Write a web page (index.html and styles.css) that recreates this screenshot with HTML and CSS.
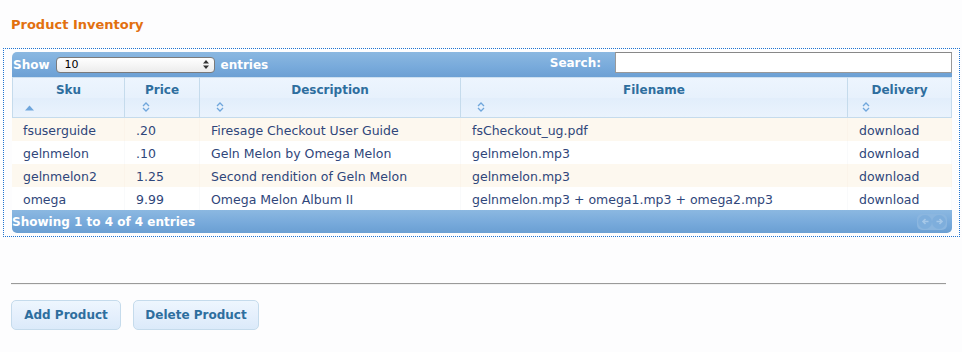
FILE: index.html
```html
<!DOCTYPE html>
<html lang="en">
<head>
  <meta charset="UTF-8">
  <meta name="viewport" content="width=device-width, initial-scale=1.0">
  <title>Product Inventory</title>
  <link rel="stylesheet" href="styles.css">
</head>
<body>
  <h2 class="title">Product Inventory</h2>

  <div class="dataWrap">
    <div class="topBar">
      <div class="lengthBox">
        <span>Show</span>
        <div class="selectBox">
          <span>10</span>
          <svg width="6" height="9" viewBox="0 0 6 9"><path d="M0 3.5 L3 0 L6 3.5 Z M0 5.5 L3 9 L6 5.5 Z" fill="#333"/></svg>
        </div>
        <span>entries</span>
      </div>
      <div class="searchBox">
        <span>Search:</span>
        <input type="text" class="searchInput">
      </div>
    </div>

    <table class="grid">
      <thead>
        <tr>
          <th class="colSku"><div class="thLabel">Sku</div><div class="sortIcon"><svg width="9" height="6" viewBox="0 0 9 6"><path d="M0 5.5 L4.5 0.5 L9 5.5 Z" fill="#6fa6dc"/></svg></div></th>
          <th class="colPrice"><div class="thLabel">Price</div><div class="sortIcon"><svg width="8" height="10" viewBox="0 0 8 10"><path d="M1 4 L4 1 L7 4 M1 6 L4 9 L7 6" fill="none" stroke="#6fa6dc" stroke-width="1.3"/></svg></div></th>
          <th class="colDesc"><div class="thLabel">Description</div><div class="sortIcon"><svg width="8" height="10" viewBox="0 0 8 10"><path d="M1 4 L4 1 L7 4 M1 6 L4 9 L7 6" fill="none" stroke="#6fa6dc" stroke-width="1.3"/></svg></div></th>
          <th class="colFile"><div class="thLabel">Filename</div><div class="sortIcon"><svg width="8" height="10" viewBox="0 0 8 10"><path d="M1 4 L4 1 L7 4 M1 6 L4 9 L7 6" fill="none" stroke="#6fa6dc" stroke-width="1.3"/></svg></div></th>
          <th class="colDelivery"><div class="thLabel">Delivery</div><div class="sortIcon"><svg width="8" height="10" viewBox="0 0 8 10"><path d="M1 4 L4 1 L7 4 M1 6 L4 9 L7 6" fill="none" stroke="#6fa6dc" stroke-width="1.3"/></svg></div></th>
        </tr>
      </thead>
      <tbody>
        <tr class="odd">
          <td>fsuserguide</td>
          <td>.20</td>
          <td>Firesage Checkout User Guide</td>
          <td>fsCheckout_ug.pdf</td>
          <td>download</td>
        </tr>
        <tr class="even">
          <td>gelnmelon</td>
          <td>.10</td>
          <td>Geln Melon by Omega Melon</td>
          <td>gelnmelon.mp3</td>
          <td>download</td>
        </tr>
        <tr class="odd">
          <td>gelnmelon2</td>
          <td>1.25</td>
          <td>Second rendition of Geln Melon</td>
          <td>gelnmelon.mp3</td>
          <td>download</td>
        </tr>
        <tr class="even">
          <td>omega</td>
          <td>9.99</td>
          <td>Omega Melon Album II</td>
          <td>gelnmelon.mp3 + omega1.mp3 + omega2.mp3</td>
          <td>download</td>
        </tr>
      </tbody>
    </table>

    <div class="bottomBar">
      <span>Showing 1 to 4 of 4 entries</span>
      <div class="pager">
        <span class="pageBtn"><svg width="9" height="9" viewBox="0 0 9 9"><path d="M7.5 4.5 H2 M4.5 2 L2 4.5 L4.5 7" fill="none" stroke="#a6c8e8" stroke-width="1.6"/></svg></span>
        <span class="pageBtn"><svg width="9" height="9" viewBox="0 0 9 9"><path d="M1.5 4.5 H7 M4.5 2 L7 4.5 L4.5 7" fill="none" stroke="#a6c8e8" stroke-width="1.6"/></svg></span>
      </div>
    </div>
  </div>

  <hr class="divider">

  <div class="actions">
    <button class="btn btnAdd">Add Product</button>
    <button class="btn btnDelete">Delete Product</button>
  </div>
</body>
</html>
```

FILE: styles.css
```css
* {
  box-sizing: border-box;
}

body {
  margin: 0;
  background-color: #fdfdfe;
  font-family: "DejaVu Sans", Verdana, sans-serif;
  font-size: 12px;
  color: #2f467a;
}

.title {
  margin: 0;
  padding: 17px 11px 0;
  height: 48px;
  font-size: 13px;
  line-height: 15px;
  color: #e2700f;
}

.dataWrap {
  width: 957px;
  margin-left: 3px;
  border: 1px dotted #1f74d2;
  padding: 3px 7px 3px 8px;
}

.topBar {
  height: 25px;
  display: flex;
  justify-content: space-between;
  align-items: center;
  padding: 0 0 0 1px;
  border-radius: 5px 5px 0 0;
  background: linear-gradient(#8bb8e1, #78aadb 60%, #6ca0d4);
  color: #fff;
  font-weight: bold;
}

.lengthBox {
  display: flex;
  align-items: center;
  gap: 6px;
}

.selectBox {
  width: 159px;
  height: 16px;
  display: flex;
  justify-content: space-between;
  align-items: center;
  padding: 0 5px 0 8px;
  border: 1px solid #7b7b7b;
  border-radius: 4px;
  background: linear-gradient(#ffffff, #ececec);
  color: #000;
  font-weight: normal;
  font-size: 11px;
}

.searchBox {
  display: flex;
  align-items: center;
  gap: 14px;
  align-self: flex-start;
}

.searchInput {
  width: 337px;
  height: 21px;
  margin: 0;
  border: 1px solid #999;
  border-top-color: #888;
  background-color: #fff;
}

.grid {
  width: 940px;
  border-collapse: separate;
  border-spacing: 0;
  table-layout: fixed;
}

.grid th {
  height: 41px;
  padding: 0;
  border: 1px solid #c5dbec;
  border-left: none;
  border-top-color: #cde0f0;
  background: linear-gradient(#edf5fe, #e7f1fc 50%, #e2eefb 52%, #eaf3fd);
  color: #2e6e9e;
  font-size: 12px;
  font-weight: bold;
  vertical-align: top;
}

.grid th:first-child {
  border-left: 1px solid #c5dbec;
}

.thLabel {
  padding-top: 5px;
  height: 20px;
  text-align: center;
}

.sortIcon {
  height: 16px;
  padding: 4px 0 0 15px;
  text-align: left;
  line-height: 0;
}

.colSku { width: 113px; }
.colPrice { width: 75px; }
.colDesc { width: 261px; }
.colFile { width: 387px; }
.colDelivery { width: 104px; }

.colSku .sortIcon { padding-left: 12px; padding-top: 7px; }
.colPrice .sortIcon { padding-left: 17px; }
.colDesc .sortIcon { padding-left: 16px; }
.colFile .sortIcon { padding-left: 16px; }
.colDelivery .sortIcon { padding-left: 14px; }

.grid td {
  height: 23px;
  padding: 1px 10px 0 11px;
  white-space: nowrap;
  font-size: 12.5px;
  border-right: 1px solid transparent;
}

.grid tr.odd td {
  background-color: #fdf8ef;
  border-right-color: #fbf4ea;
}

.grid tr.even td {
  background-color: #ffffff;
  border-right-color: #f9fafb;
}

.bottomBar {
  height: 23px;
  display: flex;
  justify-content: space-between;
  align-items: center;
  border-radius: 0 0 5px 5px;
  background: linear-gradient(#8bb8e1, #78aadb 55%, #6a9fd3);
  color: #fff;
  font-weight: bold;
}

.pager {
  display: flex;
  margin-right: 5px;
  padding: 1px;
  border-radius: 5px;
  background-color: #8bb6df;
}

.pageBtn {
  width: 14px;
  height: 14px;
  display: flex;
  align-items: center;
  justify-content: center;
  border-radius: 50%;
  background-color: #7eaedc;
}

.divider {
  width: 935px;
  margin: 46px 0 0 11px;
  border: none;
  border-top: 1px solid #9a9a9a;
  border-bottom: 1px solid #f2f2f2;
}

.actions {
  display: flex;
  gap: 12px;
  padding: 15px 0 0 11px;
}

.btn {
  height: 30px;
  padding: 0;
  border: 1px solid #c5dbec;
  border-radius: 5px;
  background: linear-gradient(#eef6fe, #e4effc 55%, #dbeafa);
  color: #2e6e9e;
  font-family: "DejaVu Sans", Verdana, sans-serif;
  font-size: 12px;
  font-weight: bold;
  white-space: nowrap;
}

.btnAdd {
  width: 110px;
}

.btnDelete {
  width: 126px;
}
```
